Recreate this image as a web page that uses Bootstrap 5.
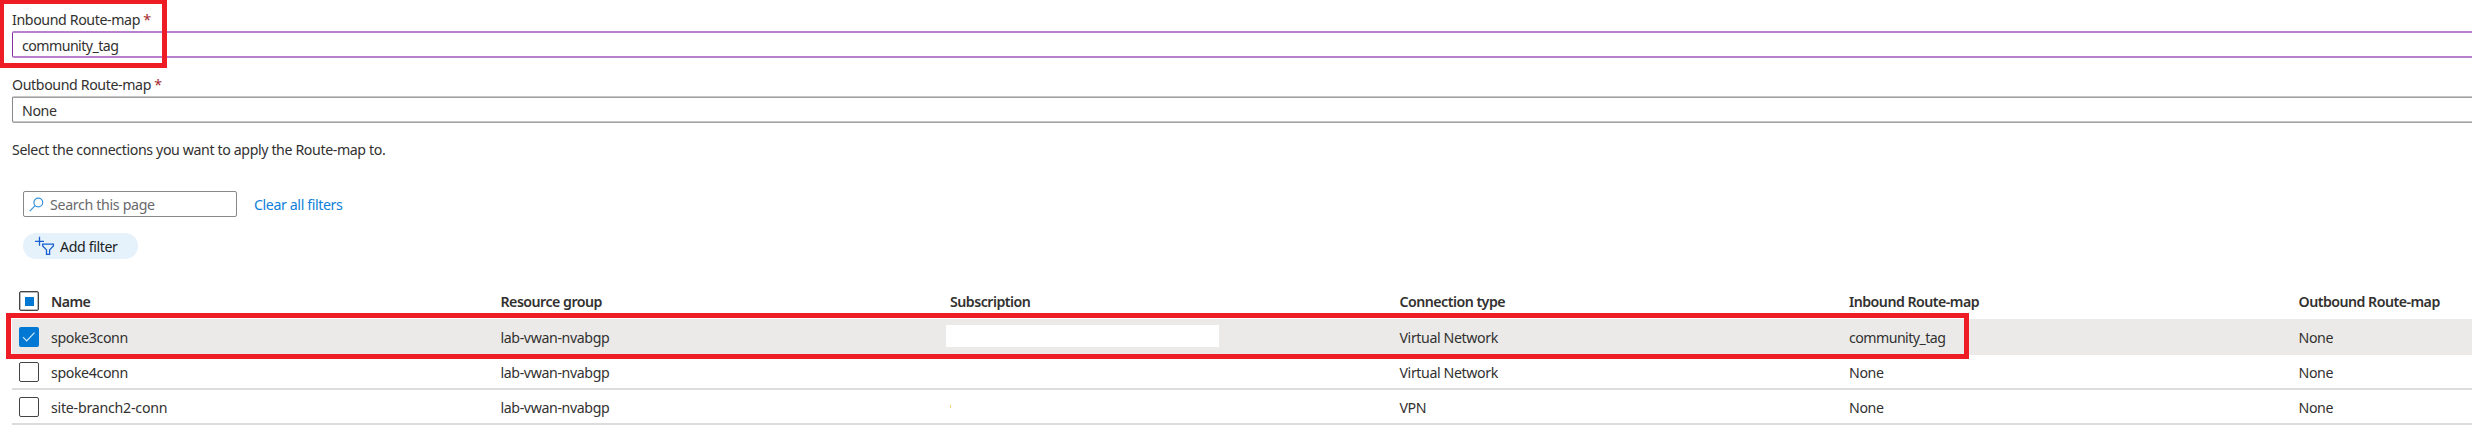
<!DOCTYPE html>
<html lang="en">
<head>
<meta charset="utf-8">
<title>Apply Route-maps</title>
<link href="https://cdn.jsdelivr.net/npm/bootstrap@5.3.0/dist/css/bootstrap.min.css" rel="stylesheet">
<style>
  body { height: 433px; overflow: hidden; background: #fff; color: #323130; font: 14.2px/22px "Noto Sans", "Open Sans", sans-serif; letter-spacing: -.39px; }
  .maps { padding: 9px 0 0 12px; }
  .fld-label { height: 20px; margin-bottom: 2px; }
  .intro { height: 20px; }
  .req { color: #a4262c; }
  .fld { height: 27px; margin-bottom: 16px; padding-left: 9px; border: 2px solid #b87fcd; border-left: 1px solid #8a2da5; border-right: 0; border-radius: 2px 0 0 2px; line-height: 25px; }
  .fld-gray { border: 1px solid #c6c6c6; border-bottom-color: #a3a3a3; border-left-color: #8a8886; border-right: 0; box-shadow: inset 0 1px #a0a0a0, inset 0 -1px #c6c6c6; line-height: 27px; }
  .community { letter-spacing: -.56px; }
  .branch { letter-spacing: -.24px; }
  .tools { gap: 17px; margin: 32px 0 0 23px; }
  .search { width: 214px; height: 26px; gap: 6px; padding-left: 5px; border: 1px solid #8a8886; border-radius: 2px; color: #69696c; }
  .search span { letter-spacing: -.33px; }
  .tools span, .pill span { padding-top: 2px; }
  .clear { color: #0f7fda; }
  .pill { width: 115px; height: 26px; gap: 5px; margin: 16px 0 0 23px; padding-left: 11px; background: #e5f1fb; color: #201f1e; }
  .conn { table-layout: fixed; width: 2460px; margin: 26px 0 0 12px; border-collapse: separate; border-spacing: 0; }
  .conn th, .conn td { padding: 0; vertical-align: top; white-space: nowrap; }
  .conn th { height: 34px; padding-top: 6px; font-weight: 600; letter-spacing: -.52px; }
  .conn td { height: 35px; padding-top: 7px; border-bottom: 2px solid #dcdcdc; }
  .conn .sel td { height: 36px; padding-top: 8px; border-bottom: 0; background: #ebeae9; }
  .conn th:first-child, .conn td:first-child { padding-left: 7px; }
  .c-tick { width: 39px; }
  .c-data { width: 449.5px; }
  .tick { display: block; width: 20px; height: 20px; border: 1.5px solid #444; border-radius: 2px; background: #fff; }
  .tick-part { padding: 4.5px; box-shadow: inset 0 0 0 .5px #777; }
  .tick-part::before { content: ""; display: block; width: 9px; height: 9px; background: #0078d4; }
  .tick-on { border: 0; background: #0078d4; }
  .redact { width: 273px; height: 22px; margin: -2px 0 0 -4px; background: #fff; }
  .speck { width: 1px; height: 3px; margin-top: 8px; background: #fbd27c; }
  .callout { position: absolute; border: 5px solid #ee1c24; }
  .callout-a { left: 0; top: 0; width: 167px; height: 68px; border-left-width: 4px; border-top-width: 4px; }
  .callout-b { left: 6px; top: 313px; width: 1963px; height: 46px; }
  svg { flex: none; }
</style>
</head>
<body>
<main class="d-flex flex-column">
  <form class="maps">
    <div class="fld-label">Inbound Route-map <span class="req">*</span></div>
    <div class="fld community">community_tag</div>
    <div class="fld-label">Outbound Route-map <span class="req">*</span></div>
    <div class="fld fld-gray">None</div>
    <div class="intro">Select the connections you want to apply the Route-map to.</div>
  </form>
  <div class="tools d-flex align-items-center">
    <div class="search d-flex align-items-center">
      <svg width="15" height="15" viewBox="0 0 15 15" fill="none" stroke="#3b93dc" stroke-width="1.2"><circle cx="9.3" cy="5.5" r="4.4"/><path d="M6.2 8.7 .7 14.2"/></svg>
      <span>Search this page</span>
    </div>
    <span class="clear">Clear all filters</span>
  </div>
  <div class="pill rounded-pill d-flex align-items-center">
    <svg width="21" height="20" viewBox="0 0 21 20" fill="none" stroke="#155fd0" stroke-width="1.3"><path d="M5.5.8v9M1 5.3h9M8.7 8.2h10.7v1.7l-3.8 4v4.4h-3.1v-4.4l-3.8-4z"/></svg>
    <span>Add filter</span>
  </div>
  <table class="conn">
    <colgroup><col class="c-tick"><col class="c-data"><col class="c-data"><col class="c-data"><col class="c-data"><col class="c-data"><col></colgroup>
    <thead><tr><th><span class="tick tick-part"></span></th><th>Name</th><th>Resource group</th><th>Subscription</th><th>Connection type</th><th>Inbound Route-map</th><th>Outbound Route-map</th></tr></thead>
    <tbody>
      <tr class="sel"><td><span class="tick tick-on"><svg class="d-block" width="20" height="20" viewBox="0 0 20 20" fill="none" stroke="#d6ebfa" stroke-width="1.2"><path d="m4 10.2 3.7 3.7 7.8-8.2"/></svg></span></td><td>spoke3conn</td><td>lab-vwan-nvabgp</td><td><div class="redact"></div></td><td>Virtual Network</td><td class="community">community_tag</td><td>None</td></tr>
      <tr><td><span class="tick"></span></td><td>spoke4conn</td><td>lab-vwan-nvabgp</td><td></td><td>Virtual Network</td><td>None</td><td>None</td></tr>
      <tr><td><span class="tick"></span></td><td class="branch">site-branch2-conn</td><td>lab-vwan-nvabgp</td><td><div class="speck"></div></td><td>VPN</td><td>None</td><td>None</td></tr>
    </tbody>
  </table>
</main>
<div class="callout callout-a"></div>
<div class="callout callout-b"></div>
<script src="https://cdn.jsdelivr.net/npm/bootstrap@5.3.0/dist/js/bootstrap.bundle.min.js"></script>
</body>
</html>
